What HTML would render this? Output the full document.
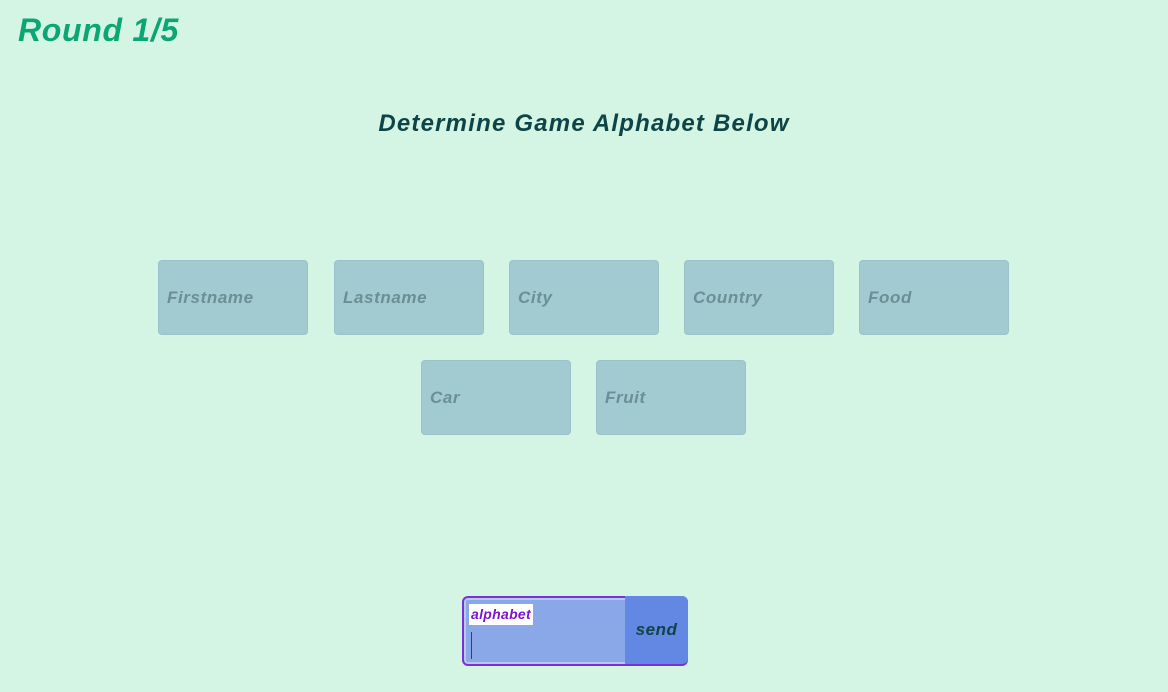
<!DOCTYPE html>
<html><head><meta charset="utf-8"><style>
html,body{margin:0;padding:0}
body{width:1168px;height:692px;background:#d4f5e3;position:relative;overflow:hidden;font-family:"Liberation Sans",sans-serif;font-style:italic;font-weight:bold}
.t{position:absolute;left:18px;top:12px;font-size:32px;color:#0aa673;letter-spacing:0.7px}
.h{position:absolute;left:0;width:1168px;top:110px;text-align:center;font-size:24px;color:#0d4447;letter-spacing:1.2px}
.b{position:absolute;width:148px;height:73px;background:#a1cbd0;border:1px solid #99c3c8;border-radius:4px}
.b span{position:absolute;left:8px;top:27px;font-size:17px;color:#6c8f93;letter-spacing:0.6px}
.in{position:absolute;left:462px;top:596px;width:222px;height:66px;border:2px solid #7b2fd6;border-radius:6px;background:#8aa8e8;box-shadow:inset 0 0 0 2px #b8c8f4}
.lab{position:absolute;left:469px;top:604px;width:64px;height:21px;background:#fff;color:#7b14d0;font-size:14px;line-height:21px;padding-left:2px;box-sizing:border-box;letter-spacing:0.3px}
.cur{position:absolute;left:471px;top:632px;width:1px;height:27px;background:#1d4f58}
.s{position:absolute;left:625px;top:596px;width:63px;height:69px;background:#6388e3;border-radius:0 6px 6px 0;border-bottom:1px solid #7b2fd6;box-sizing:border-box;color:#0d4447;font-size:17px;text-align:center;line-height:68px;letter-spacing:0.5px}
</style></head><body>
<div class="t">Round 1/5</div>
<div class="h">Determine Game Alphabet Below</div>
<div class="b" style="left:158px;top:260px"><span>Firstname</span></div>
<div class="b" style="left:334px;top:260px"><span>Lastname</span></div>
<div class="b" style="left:509px;top:260px"><span>City</span></div>
<div class="b" style="left:684px;top:260px"><span>Country</span></div>
<div class="b" style="left:859px;top:260px"><span>Food</span></div>
<div class="b" style="left:421px;top:360px"><span>Car</span></div>
<div class="b" style="left:596px;top:360px"><span>Fruit</span></div>
<div class="in"></div>
<div class="lab">alphabet</div>
<div class="cur"></div>
<div class="s">send</div>
</body></html>
